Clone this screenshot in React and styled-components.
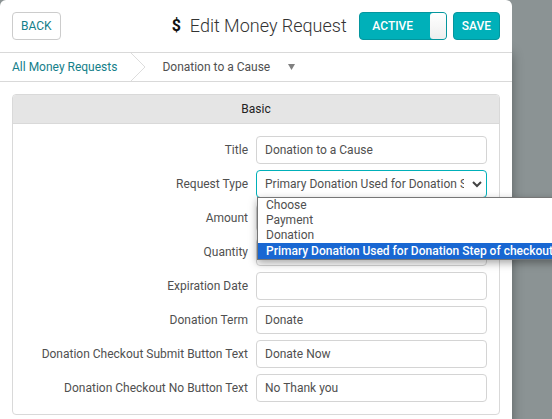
import { useState } from 'react';
import styled, { createGlobalStyle, css } from 'styled-components';

const requestTypes = [
  'Choose',
  'Payment',
  'Donation',
  'Primary Donation Used for Donation Step of checkout',
];

const App = () => {
  const [active, setActive] = useState(true);
  const [type, setType] = useState(requestTypes[3]);
  const [open, setOpen] = useState(true);

  const pickType = (option) => {
    setType(option);
    setOpen(false);
  };

  return (
    <>
      <GlobalStyle />
      <Page>
        <Modal>
          <Header>
            <BackButton type='button'>BACK</BackButton>
            <Actions>
              <Heading>
                <Dollar>$</Dollar>
                Edit Money Request
              </Heading>
              <Toggle
                type='button'
                role='switch'
                aria-checked={active}
                onClick={() => setActive(!active)}
              >
                <ToggleText>{active ? 'ACTIVE' : 'INACTIVE'}</ToggleText>
                <Knob />
              </Toggle>
              <SaveButton type='button'>SAVE</SaveButton>
            </Actions>
          </Header>
          <Breadcrumb>
            <CrumbLink href='#requests'>All Money Requests</CrumbLink>
            <Separator viewBox='0 0 16 28'>
              <path d='M1 0L15 14L1 28' fill='none' stroke='#dddddd' />
            </Separator>
            <CrumbButton type='button'>
              Donation to a Cause
              <Caret viewBox='0 0 7 6'>
                <path d='M0 0H7L3.5 6Z' fill='#808080' />
              </Caret>
            </CrumbButton>
          </Breadcrumb>
          <Panel>
            <PanelTitle>Basic</PanelTitle>
            <Form>
              <Field id='title' label='Title' value='Donation to a Cause' />
              <Row>
                <Label htmlFor='type'>Request Type</Label>
                <SelectBox>
                  <Select
                    id='type'
                    value={type}
                    onChange={(e) => pickType(e.target.value)}
                  >
                    {requestTypes.map((option) => (
                      <option key={option}>{option}</option>
                    ))}
                  </Select>
                  <Chevron viewBox='0 0 10 7'>
                    <path d='M1 1L5 5L9 1' fill='none' stroke='#444444' strokeWidth='2' />
                  </Chevron>
                  {open && (
                    <Options role='listbox' aria-label='Request Type'>
                      {requestTypes.map((option) => (
                        <Option
                          key={option}
                          role='option'
                          aria-selected={option === type}
                          $selected={option === type}
                          onClick={() => pickType(option)}
                        >
                          {option}
                        </Option>
                      ))}
                    </Options>
                  )}
                </SelectBox>
              </Row>
              <Field id='amount' label='Amount' />
              <Field id='quantity' label='Quantity' />
              <Field id='expiration' label='Expiration Date' />
              <Field id='term' label='Donation Term' value='Donate' />
              <Field
                id='submitText'
                label='Donation Checkout Submit Button Text'
                value='Donate Now'
              />
              <Field
                id='noText'
                label='Donation Checkout No Button Text'
                value='No Thank you'
              />
            </Form>
          </Panel>
        </Modal>
      </Page>
    </>
  );
};

const Field = ({ id, label, value = '' }) => {
  return (
    <Row>
      <Label htmlFor={id}>{label}</Label>
      <Input id={id} type='text' defaultValue={value} />
    </Row>
  );
};

const GlobalStyle = createGlobalStyle`
  * {
    box-sizing: border-box;
  }
  body {
    margin: 0;
    overflow: hidden;
    background: #8b9394;
    color: #505050;
    font-family: Roboto, 'Liberation Sans', sans-serif;
    font-size: 12px;
  }
  button, input, select {
    font: inherit;
    color: inherit;
  }
`;

const Page = styled.div`
  min-height: 100vh;
  padding-right: 40px;
  display: flex;
`;

const Modal = styled.main`
  flex: 1;
  min-width: 0;
  background: white;
  border-radius: 6px 6px 0 0;
  box-shadow: 0 52px 12px rgba(0, 0, 0, 0.35);
`;

const Header = styled.header`
  display: flex;
  align-items: center;
  justify-content: space-between;
  padding: 12px;
  border-bottom: 1px solid #d9d9d9;
`;

const Actions = styled.div`
  display: flex;
  align-items: center;
  gap: 6px;
`;

const Heading = styled.h1`
  display: flex;
  align-items: center;
  gap: 9px;
  margin: 0 6px 0 0;
  color: #333333;
  font-size: 18px;
  font-weight: 300;
  line-height: 28px;
`;

const Dollar = styled.span`
  color: #111111;
  font-size: 16px;
  font-weight: 700;
`;

const buttonStyle = css`
  height: 28px;
  padding: 0 8px;
  border-radius: 4px;
  cursor: pointer;
`;

const BackButton = styled.button`
  ${buttonStyle}
  border: 1px solid #cccccc;
  background: white;
  color: #15808a;
`;

const SaveButton = styled.button`
  ${buttonStyle}
  border: 1px solid #05969e;
  background: #00b0b9;
  color: white;
  font-weight: 500;
`;

const Toggle = styled.button`
  ${buttonStyle}
  display: flex;
  width: 88px;
  padding: 0;
  border: 1px solid #05969e;
  background: #00b0b9;
  color: white;
  font-weight: 500;
`;

const ToggleText = styled.span`
  flex: 1;
  padding-right: 4px;
  line-height: 26px;
`;

const Knob = styled.span`
  width: 16px;
  height: 26px;
  border-radius: 3px;
  background: linear-gradient(#ffffff, #eeeeee);
`;

const Breadcrumb = styled.nav`
  display: flex;
  align-items: center;
  height: 29px;
  padding: 0 12px;
  border-bottom: 1px solid #d9d9d9;
`;

const CrumbLink = styled.a`
  color: #15808a;
  text-decoration: none;
`;

const Separator = styled.svg`
  width: 16px;
  height: 28px;
  margin: 0 16px 0 13px;
`;

const CrumbButton = styled.button`
  display: flex;
  align-items: center;
  gap: 18px;
  padding: 0;
  border: 0;
  background: none;
`;

const Caret = styled.svg`
  width: 7px;
  height: 6px;
`;

const Panel = styled.section`
  margin: 12px 12px 4px;
  border: 1px solid #d9d9d9;
  border-radius: 4px;
`;

const PanelTitle = styled.h2`
  margin: 0;
  border-bottom: 1px solid #d9d9d9;
  border-radius: 3px 3px 0 0;
  background: #e5e5e5;
  color: #222222;
  font-size: 12px;
  font-weight: 400;
  line-height: 28px;
  text-align: center;
`;

const Form = styled.form`
  display: grid;
  gap: 6px;
  padding: 12px;
`;

const Row = styled.div`
  display: grid;
  grid-template-columns: 1fr 1fr;
  align-items: center;
`;

const Label = styled.label`
  padding-right: 8px;
  text-align: right;
  white-space: nowrap;
`;

const Input = styled.input`
  width: 100%;
  height: 28px;
  padding: 0 8px;
  border: 1px solid #d4d4d4;
  border-radius: 4px;
  background: white;
  outline: none;
`;

const SelectBox = styled.div`
  position: relative;
  min-width: 0;
`;

const Select = styled.select`
  display: block;
  width: 100%;
  height: 28px;
  padding: 0 22px 0 8px;
  appearance: none;
  border: 1px solid #00b0b9;
  border-radius: 4px;
  background: white;
  outline: none;
`;

const Chevron = styled.svg`
  position: absolute;
  top: 11px;
  right: 5px;
  width: 10px;
  height: 7px;
  pointer-events: none;
`;

const Options = styled.ul`
  position: absolute;
  z-index: 1;
  top: 27px;
  left: 1px;
  margin: 0;
  padding: 0;
  border: 1px solid #767676;
  background: white;
  box-shadow: 0 3px 8px rgba(0, 0, 0, 0.35);
  list-style: none;
`;

const Option = styled.li`
  padding: 0 8px;
  line-height: 15px;
  white-space: nowrap;
  cursor: default;
  ${({ $selected }) =>
    $selected &&
    css`
      background: #1967d2;
      color: white;
      font-weight: 500;
      line-height: 16px;
    `}
`;

export default App;
